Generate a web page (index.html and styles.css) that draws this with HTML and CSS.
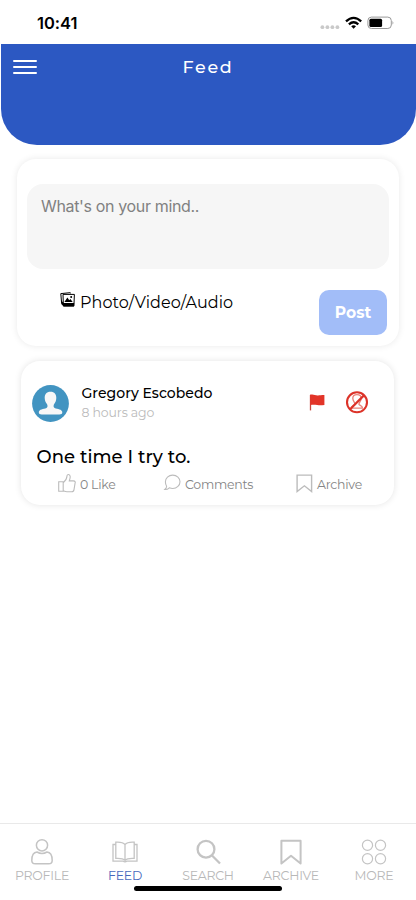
FILE: index.html
```html
<!DOCTYPE html>
<html lang="en">
<head>
<meta charset="utf-8">
<meta name="viewport" content="width=device-width, initial-scale=1">
<title>Feed</title>
<link rel="stylesheet" href="styles.css">
</head>
<body>
<div class="status">
  <span class="time">10:41</span>
  <svg class="status-icons" width="74" height="16" viewBox="0 0 74 16">
    <g fill="#c9c9c9"><circle cx="1.400" cy="11.200" r="1.900"/><circle cx="6.400" cy="11.200" r="1.900"/><circle cx="11.400" cy="11.200" r="1.900"/><circle cx="16.400" cy="11.200" r="1.900"/></g>
    <g fill="none" stroke="#000" stroke-width="2.300"><path d="M25 5.400Q32.600-1.600 40.200 5.400"/><path d="M27.900 8.400Q32.600 4.200 37.300 8.400"/></g>
    <path d="M30.200 10.300Q32.600 8.200 35 10.300L32.600 12.700z"/>
    <rect x="46.900" y="1.100" width="23.400" height="11.400" rx="3.500" fill="none" stroke="#999"/>
    <rect x="48.400" y="2.700" width="12.700" height="8.200" rx="1.500"/>
    <path d="M71.500 4.800q1.800 2 0 4z" fill="#999"/>
  </svg>
</div>
<header class="header">
  <svg class="menu" width="24" height="16" viewBox="0 0 24 16" stroke="#fff" stroke-width="2" stroke-linecap="round"><path d="M1 2h22M1 8h22M1 13.900h22"/></svg>
  <h1 class="title">Feed</h1>
</header>
<main class="main">
  <section class="composer">
    <div class="input">What's on your mind..</div>
    <div class="composer-row">
      <div class="attach">
        <svg width="15" height="15" viewBox="0 0 15 15">
          <path d="M10.500 1.400 10.300.7.8 1.600 1.600 11" fill="none" stroke="#000"/>
          <path d="M3 2.400h11.400l-.5 11.700H3.400z" fill="#fff" stroke="#000"/>
          <path d="M3.500 10.900h10.700l-.2 3.300H3.600L1.200 12V8z"/>
          <path d="m4.400 10 3-4.400 1.800 2.700 1.200-1.200 2.300 2.900z"/><circle cx="11.200" cy="4.900" r="1"/>
        </svg>
        <span class="attach-label">Photo/Video/Audio</span>
      </div>
      <button class="post-btn"><span class="post-text">Post</span></button>
    </div>
  </section>
  <article class="post">
    <div class="post-head">
      <svg class="avatar" width="37" height="37" viewBox="0 0 37 37"><circle cx="18.500" cy="18.500" r="18.400" fill="#4294c1"/><path d="M18.500 6.800c4 0 5.900 2.600 5.800 6.200-.1 3.200-1.100 4.600-2.300 6.300-.7 1.800-.6 3 .6 3.700 3 1.200 7.500 1.200 7.700 4.100.1 1.800-1.100 2.500-2.900 2.500H9.700c-1.800 0-3-.7-2.900-2.500.2-2.900 4.700-2.900 7.700-4.100 1.200-.7 1.300-1.900.6-3.700-1.200-1.700-2.300-3.100-2.400-6.300-.1-3.600 1.800-6.200 5.800-6.200z" fill="#f7f7f7"/></svg>
      <div class="who"><div class="name">Gregory Escobedo</div><div class="ago">8 hours ago</div></div>
      <svg class="flag" width="16" height="17" viewBox="0 0 16 17"><path d="M1.500.8v15.600" stroke="#c9473d" stroke-width="1.300"/><path d="M1.200.7c3-.8 4.800.5 7.200.7 2.600.1 4.300-.5 7-.4v10c-3 .2-4.800.3-7.200 0-2.500-.4-4-.6-7 .1z" fill="#e23428"/></svg>
      <svg class="block" width="24" height="24" viewBox="0 0 24 24" fill="none"><path d="M7.800 8.300c0-5 8.400-5 8.400 0 0 3-2.200 3.800-2.300 6 .5 1.300 3.500 1.200 3.700 3.900H6.400c.2-2.700 3.200-2.600 3.700-3.900-.1-2.200-2.300-3-2.300-6z" stroke="#e98279" stroke-width="1.300"/><circle cx="12" cy="12.300" r="10" stroke="#dc3329" stroke-width="2.100"/><path d="M4.800 19.500 19.200 5.100" stroke="#dc3329" stroke-width="2.200"/></svg>
    </div>
    <p class="body">One time I try to.</p>
    <div class="actions">
      <div class="action like"><svg width="18" height="19" viewBox="0 0 18 19"><path d="M.7 7.700h4.500v9.600H.7zM5.200 8.700C7.400 7 8.800 4.800 9 2 9-.1 12-.2 12.200 2.500c.1 1.800-.6 3.200-.9 4.400h4c2 0 2.300 1.500 1.700 2.700l-1 6c-.2 1.400-1 2.200-2.400 2.200H9c-1.700 0-2.500-.5-3.800-1"/></svg><span>0 Like</span></div>
      <div class="action comments"><svg width="17" height="17" viewBox="0 0 17 17"><path d="M8.700 1.100c4.200 0 7.300 3 7.300 6.600s-3.100 6.800-7.300 6.800c-1.300 0-2.400-.3-3.400-.7-1.200 1.200-2.700 1.800-4.500 1.700 1-.9 1.800-2.100 1.800-3.300-.8-1.100-1.200-2.700-1.200-4.400 0-3.700 3.100-6.700 7.300-6.700z"/></svg><span>Comments</span></div>
      <div class="action archive"><svg width="17" height="19" viewBox="0 0 17 19"><path d="M1.100 1.100h14.500v16.400l-7.200-5.700-7.300 5.700z" stroke-width="1.400"/></svg><span>Archive</span></div>
    </div>
  </article>
</main>
<nav class="tabs">
  <div class="tab profile"><svg viewBox="0 0 28 28"><circle cx="14" cy="7.300" r="5.600"/><path d="M9 14c3 1.700 7 1.700 10 0 3.400.3 5.200 3.700 5.200 8.400 0 2.200-1.200 3.300-3.500 3.300H7.300c-2.300 0-3.500-1.100-3.500-3.300 0-4.700 1.800-8.100 5.200-8.400z"/></svg><span>PROFILE</span></div>
  <div class="tab feed"><svg viewBox="0 0 28 28" stroke-width="1.300"><path d="M14 6.700v15.700c-1.800-1.900-4.800-2.300-9.200-2V4.200C9 3.900 12.300 4.500 14 6.700zM14 6.700c1.700-2.200 5-2.800 9.200-2.500v16.200c-4.400-.3-7.400.1-9.200 2M4.800 6.500H2v16.600h10c1 .8 3 .8 4 0h10V6.500h-2.800"/></svg><span>FEED</span></div>
  <div class="tab search"><svg viewBox="0 0 28 28" stroke-width="2.300"><circle cx="12" cy="11.200" r="8.400"/><path d="m18 17.500 8 8"/></svg><span>SEARCH</span></div>
  <div class="tab saved"><svg viewBox="0 0 28 28" stroke-width="2" stroke-linejoin="round"><path d="M4.400 2.700h19.200v22.800L14 17.700l-9.600 7.800z"/></svg><span>ARCHIVE</span></div>
  <div class="tab more"><svg viewBox="0 0 28 28" stroke-width="1.200"><circle cx="7.500" cy="7.300" r="5.100"/><circle cx="20.500" cy="7.300" r="5.100"/><circle cx="7.500" cy="20.800" r="5.100"/><circle cx="20.500" cy="20.800" r="5.100"/></svg><span>MORE</span></div>
</nav>
<div class="home-indicator"></div>
</body>
</html>
```
FILE: styles.css
```css
* { box-sizing: border-box; }
body { margin: 0; height: 900px; display: flex; flex-direction: column; overflow: hidden; background: #fff; color: #000; font-family: Montserrat, Inter, sans-serif; position: relative; }
span, h1, .name, .ago, .body { white-space: nowrap; }
svg { display: block; flex: none; overflow: visible; }
.status { height: 44px; flex: none; display: flex; justify-content: space-between; padding: 13px 21px 0 37px; }
.time { font: 600 16.500px/20px Inter, sans-serif; letter-spacing: -.05px; }
.status-icons { margin-top: 3px; }
.header { height: 100.500px; flex: none; margin: 0 .5px; background: #2c58c2; border-radius: 0 0 36px 36px; display: grid; grid-template-columns: 24px 1fr 24px; padding: 11px 12.500px; align-items: start; }
.menu { margin-top: 4px; }
.title { margin: 0; text-align: center; color: #fff; font-size: 17.500px; font-weight: 500; line-height: 23px; letter-spacing: 1.700px; }
.main { flex: 1; padding: 14.500px 17px 0; }
.composer { height: 186.500px; border-radius: 19px; padding: 25px 10px 0; box-shadow: 0 0 7px rgba(0,0,0,.09); }
.composer, .post { background: #fff; }
.input { height: 85px; border-radius: 16px; padding: 11px 14px; background: #f6f6f6; color: #818181; font: 400 16px/22px Inter, sans-serif; letter-spacing: -.35px; }
.composer-row { display: flex; justify-content: space-between; padding: 21px 2px 0 33px; }
.attach { display: flex; height: 24px; gap: 5px; }
.attach svg { margin-top: 2px; }
.attach-label { font-size: 16px; line-height: 25px; letter-spacing: .06px; }
.post-btn { width: 68px; height: 45px; border: 0; border-radius: 10px; padding: 0; background: #a2bdf8; color: #fff; font: 700 15.500px/24px Montserrat, Inter, sans-serif; }
.post { height: 144.500px; margin: 15px 5px 0 4px; border-radius: 19px; padding: 24px 11px 0; box-shadow: 0 0 7px rgba(0,0,0,.11); }
.post-head { display: flex; height: 60px; }
.who { margin-left: 12.500px; width: 227px; }
.name { font-size: 14px; font-weight: 500; line-height: 16px; letter-spacing: .03px; }
.ago { font-size: 12.500px; line-height: 23px; color: #bbb; letter-spacing: -.13px; }
.flag { margin-top: 9px; }
.block { margin: 5px 0 0 20px; }
.body { margin: 0 0 0 4.500px; font-size: 18px; font-weight: 500; line-height: 24px; letter-spacing: .04px; }
.actions { display: flex; height: 22px; padding-left: 26px; color: #858585; font-size: 12.500px; line-height: 20px; letter-spacing: -.25px; }
.action { display: flex; gap: 4px; }
.action svg { fill: none; stroke: #bcbcbc; stroke-width: 1.100; }
.action span { padding-top: 6px; }
.action svg { margin-top: 5px; }
.like { width: 106px; }
.comments { width: 132px; }
.tabs { height: 77px; flex: none; border-top: 1px solid #e9e9e9; display: grid; grid-template-columns: repeat(5, 83px); justify-content: center; padding-top: 14px; }
.tab { display: flex; flex-direction: column; align-items: center; color: #b8b8b8; font-size: 12.500px; line-height: 20px; letter-spacing: -.25px; }
.tab svg { width: 28px; height: 28px; fill: none; stroke: #c4c4c4; }
.profile svg { stroke-width: 1.500; }
.tab.feed { color: #4668bd; }
.home-indicator { position: absolute; left: 134px; top: 886px; width: 148px; height: 5px; border-radius: 3px; background: #000; }
```
